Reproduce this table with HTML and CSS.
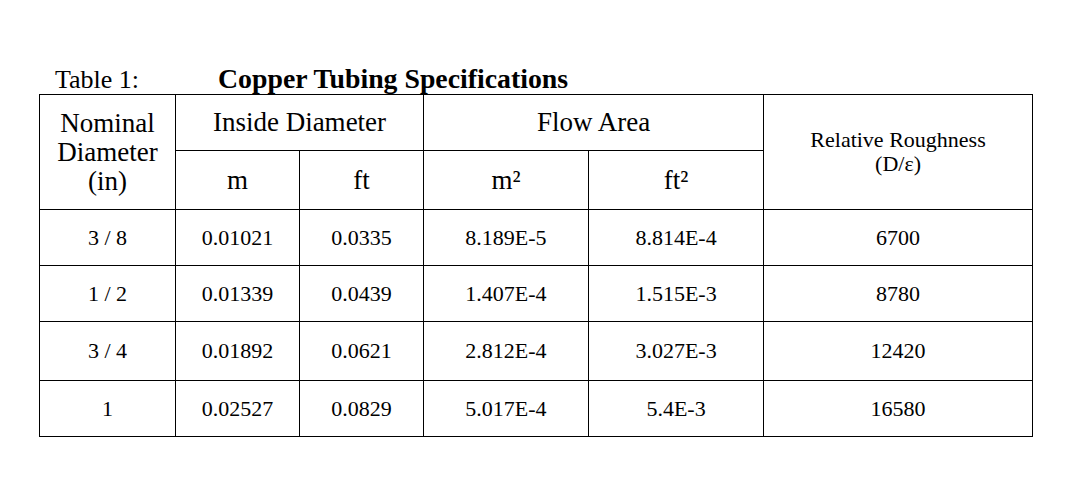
FILE: index.html
```html
<!DOCTYPE html>
<html>
<head>
    <title>Copper Tubing Specifications</title>
    <meta charset="utf-8">
    <link rel="stylesheet" href="styles.css">
</head>
<body>
    <div class="page">
        <div class="caption">
            <span class="label">Table 1:</span>
            <span class="title">Copper Tubing Specifications</span>
        </div>

        <table class="specs">
            <colgroup>
                <col class="c-nominal">
                <col class="c-m">
                <col class="c-ft">
                <col class="c-m2">
                <col class="c-ft2">
                <col class="c-rough">
            </colgroup>
            <thead>
                <tr class="head-top">
                    <th rowspan="2" class="nominal">Nominal<br>Diameter<br>(in)</th>
                    <th colspan="2">Inside Diameter</th>
                    <th colspan="2">Flow Area</th>
                    <th rowspan="2" class="rough">Relative Roughness<br>(D/ε)</th>
                </tr>
                <tr class="head-sub">
                    <th>m</th>
                    <th>ft</th>
                    <th>m²</th>
                    <th>ft²</th>
                </tr>
            </thead>
            <tbody>
                <tr class="row-short">
                    <td>3 / 8</td>
                    <td>0.01021</td>
                    <td>0.0335</td>
                    <td>8.189E-5</td>
                    <td>8.814E-4</td>
                    <td>6700</td>
                </tr>
                <tr class="row-short">
                    <td>1 / 2</td>
                    <td>0.01339</td>
                    <td>0.0439</td>
                    <td>1.407E-4</td>
                    <td>1.515E-3</td>
                    <td>8780</td>
                </tr>
                <tr class="row-tall">
                    <td>3 / 4</td>
                    <td>0.01892</td>
                    <td>0.0621</td>
                    <td>2.812E-4</td>
                    <td>3.027E-3</td>
                    <td>12420</td>
                </tr>
                <tr class="row-short">
                    <td>1</td>
                    <td>0.02527</td>
                    <td>0.0829</td>
                    <td>5.017E-4</td>
                    <td>5.4E-3</td>
                    <td>16580</td>
                </tr>
            </tbody>
        </table>
    </div>
</body>
</html>
```

FILE: styles.css
```css
body {
    margin: 0;
    background-color: #ffffff;
    color: #000000;
    font-family: "Liberation Serif", "Times New Roman", serif;
}

.page {
    padding: 65px 0 0 39px;
}

.caption {
    display: flex;
    align-items: baseline;
    height: 28px;
    line-height: 28px;
    margin-bottom: 1px;
}

.label {
    width: 163px;
    padding-left: 16px;
    font-size: 26px;
}

.title {
    font-size: 27.8px;
    font-weight: bold;
}

.specs {
    width: 993px;
    table-layout: fixed;
    border-collapse: collapse;
    border: 1px solid #000000;
}

.specs th,
.specs td {
    border: 1px solid #000000;
    padding: 0;
    text-align: center;
    vertical-align: middle;
}

.specs th {
    font-weight: normal;
    font-size: 27px;
    line-height: 29px;
}

.specs td {
    font-size: 22px;
    line-height: 24px;
}

.c-nominal { width: 136px; }
.c-m { width: 124px; }
.c-ft { width: 124px; }
.c-m2 { width: 165px; }
.c-ft2 { width: 175px; }
.c-rough { width: 269px; }

.head-top { height: 56px; }
.head-sub { height: 59px; }
.row-short { height: 56px; }
.row-tall { height: 59px; }

.specs th.rough {
    font-size: 22px;
    line-height: 24px;
}
```
